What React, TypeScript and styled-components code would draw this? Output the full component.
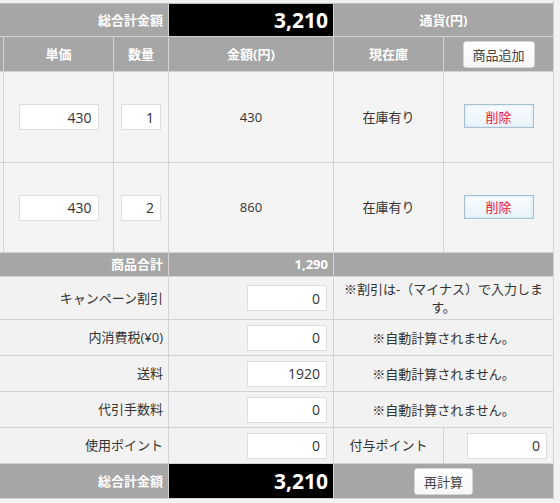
import React from 'react';
import styled, { createGlobalStyle, css } from 'styled-components';

const Global = createGlobalStyle`
  html, body { margin: 0; padding: 0; background: #f2f2f2; }
  body {
    font-family: "Open Sans", "Noto Sans CJK JP", sans-serif;
    color: #333;
  }
`;

const Viewport = styled.div`
  width: 560px;
  height: 503px;
  overflow: hidden;
  background: #f2f2f2;
`;

const Table = styled.table`
  margin-left: -76px;
  width: 630px;
  table-layout: fixed;
  border-collapse: separate;
  border-spacing: 0;
  font-size: 13px;
  line-height: 1.4;
`;

const Row = styled.tr<{ $h: number }>`
  height: ${(p) => p.$h}px;
`;

type Variant = 'head' | 'item' | 'body' | 'black' | 'strip';
type Align = 'left' | 'center' | 'right';

const Cell = styled.td<{ $v?: Variant; $align?: Align }>`
  padding: 0 5px;
  border-right: 1px solid #d3d3d3;
  border-bottom: 1px solid #d3d3d3;
  text-align: ${(p) => p.$align || 'center'};
  vertical-align: middle;
  color: #333;
  background: #f2f2f2;
  ${(p) =>
    p.$v === 'head' &&
    css`
      background: #a6a6a6;
      color: #fff;
      font-weight: 700;
    `}
  ${(p) =>
    p.$v === 'item' &&
    css`
      background: #f4f4f4;
    `}
  ${(p) =>
    p.$v === 'black' &&
    css`
      background: #000;
      color: #fff;
      font-weight: 700;
      font-size: 21px;
      line-height: 1;
    `}
  ${(p) =>
    p.$v === 'strip' &&
    css`
      background: #f0f0f0;
      border-bottom-color: #bdbdbd;
    `}
`;

const placeBlock = (align: Align = 'center') =>
  align === 'right'
    ? css`margin: 0 1px 0 auto;`
    : css`margin: 0 auto;`;

const NumInput = styled.input<{ $w: number; $align?: Align }>`
  display: block;
  box-sizing: border-box;
  width: ${(p) => p.$w}px;
  height: 26px;
  ${(p) => placeBlock(p.$align)}
  padding: 0 6px;
  border: 1px solid #dedede;
  background: #fff;
  font-family: "Open Sans", sans-serif;
  font-size: 14px;
  color: #333;
  text-align: right;
  outline: none;
`;

const GreyButton = styled.button`
  display: block;
  box-sizing: border-box;
  height: 27px;
  margin: 0 auto;
  padding: 0 9px;
  border: 1px solid #d4d4d4;
  border-radius: 3px;
  background: linear-gradient(#ffffff, #f6f6f6);
  font-family: "Open Sans", "Noto Sans CJK JP", sans-serif;
  font-size: 13px;
  color: #444;
`;

const DeleteButton = styled.button`
  display: block;
  box-sizing: border-box;
  width: 70px;
  height: 24px;
  margin: 0 auto 2px;
  padding: 0;
  border: 1px solid #a6c0d2;
  background: linear-gradient(#f8fcfe, #e9f3f9);
  box-shadow: inset 0 0 3px #c9dfec;
  font-family: "Open Sans", "Noto Sans CJK JP", sans-serif;
  font-size: 13px;
  color: #f0103a;
`;

const Note = styled.div`
  display: flex;
  flex-direction: column;
  align-items: center;
  line-height: 18px;
`;

const NoteLine = styled.span`
  white-space: nowrap;
`;

const Subtotal = styled.span`
  font-size: 13px;
`;

const items = [
  { price: 430, qty: 1, amount: '430' },
  { price: 430, qty: 2, amount: '860' },
];

const autoNote = ['※自動計算されません。'];

const extras = [
  { label: 'キャンペーン割引', value: '0', note: ['※割引は-（マイナス）で入力しま', 'す。'], h: 43 },
  { label: '内消費税(¥0)', value: '0', note: autoNote, h: 36 },
  { label: '送料', value: '1920', note: autoNote, h: 36 },
  { label: '代引手数料', value: '0', note: autoNote, h: 36 },
];

export default function App() {
  return (
    <Viewport>
      <Global />
      <Table>
        <colgroup>
          <col style={{ width: 80 }} />
          <col style={{ width: 110 }} />
          <col style={{ width: 55 }} />
          <col style={{ width: 165 }} />
          <col style={{ width: 110 }} />
          <col style={{ width: 110 }} />
        </colgroup>
        <tbody>
          <Row $h={4}>
            <Cell $v="strip" colSpan={6} />
          </Row>
          <Row $h={33}>
            <Cell $v="head" colSpan={3} $align="right">総合計金額</Cell>
            <Cell $v="black" $align="right">3,210</Cell>
            <Cell $v="head" colSpan={2}>通貨(円)</Cell>
          </Row>
          <Row $h={35}>
            <Cell $v="head" />
            <Cell $v="head">単価</Cell>
            <Cell $v="head">数量</Cell>
            <Cell $v="head">金額(円)</Cell>
            <Cell $v="head">現在庫</Cell>
            <Cell $v="head">
              <GreyButton>商品追加</GreyButton>
            </Cell>
          </Row>
          {items.map((it, i) => (
            <Row $h={i === 0 ? 91 : 90} key={i}>
              <Cell $v="item" />
              <Cell $v="item">
                <NumInput $w={80} defaultValue={it.price} />
              </Cell>
              <Cell $v="item">
                <NumInput $w={40} defaultValue={it.qty} />
              </Cell>
              <Cell $v="item">{it.amount}</Cell>
              <Cell $v="item">在庫有り</Cell>
              <Cell $v="item">
                <DeleteButton>削除</DeleteButton>
              </Cell>
            </Row>
          ))}
          <Row $h={24}>
            <Cell $v="head" colSpan={3} $align="right">商品合計</Cell>
            <Cell $v="head" $align="right">
              <Subtotal>1,290</Subtotal>
            </Cell>
            <Cell $v="head" colSpan={2} />
          </Row>
          {extras.map((e) => (
            <Row $h={e.h} key={e.label}>
              <Cell colSpan={3} $align="right">{e.label}</Cell>
              <Cell>
                <NumInput $w={80} $align="right" defaultValue={e.value} />
              </Cell>
              <Cell colSpan={2}>
                <Note>
                  {e.note.map((line) => (
                    <NoteLine key={line}>{line}</NoteLine>
                  ))}
                </Note>
              </Cell>
            </Row>
          ))}
          <Row $h={36}>
            <Cell colSpan={3} $align="right">使用ポイント</Cell>
            <Cell>
              <NumInput $w={80} $align="right" defaultValue="0" />
            </Cell>
            <Cell>付与ポイント</Cell>
            <Cell>
              <NumInput $w={80} $align="right" defaultValue="0" />
            </Cell>
          </Row>
          <Row $h={35}>
            <Cell $v="head" colSpan={3} $align="right">総合計金額</Cell>
            <Cell $v="black" $align="right">3,210</Cell>
            <Cell $v="head" colSpan={2}>
              <GreyButton>再計算</GreyButton>
            </Cell>
          </Row>
        </tbody>
      </Table>
    </Viewport>
  );
}
